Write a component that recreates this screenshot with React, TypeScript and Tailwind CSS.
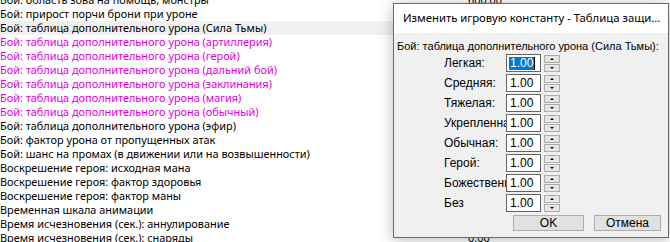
import React from 'react';

type Row = { text: string; value?: string; pink?: boolean; selected?: boolean };

const rows: Row[] = [
  { text: 'Бой: область зова на помощь, монстры', value: '600.00' },
  { text: 'Бой: прирост порчи брони при уроне' },
  { text: 'Бой: таблица дополнительного урона (Сила Тьмы)', selected: true },
  { text: 'Бой: таблица дополнительного урона (артиллерия)', pink: true },
  { text: 'Бой: таблица дополнительного урона (герой)', pink: true },
  { text: 'Бой: таблица дополнительного урона (дальний бой)', pink: true },
  { text: 'Бой: таблица дополнительного урона (заклинания)', pink: true },
  { text: 'Бой: таблица дополнительного урона (магия)', pink: true },
  { text: 'Бой: таблица дополнительного урона (обычный)', pink: true },
  { text: 'Бой: таблица дополнительного урона (эфир)' },
  { text: 'Бой: фактор урона от пропущенных атак' },
  { text: 'Бой: шанс на промах (в движении или на возвышенности)' },
  { text: 'Воскрешение героя: исходная мана' },
  { text: 'Воскрешение героя: фактор здоровья' },
  { text: 'Воскрешение героя: фактор маны' },
  { text: 'Временная шкала анимации' },
  { text: 'Время исчезновения (сек.): аннулирование' },
  { text: 'Время исчезновения (сек.): снаряды', value: '0.00' },
];

const armors = ['Легкая:', 'Средняя:', 'Тяжелая:', 'Укрепленная:', 'Обычная:', 'Герой:', 'Божественная:', 'Без'];

function Spinner() {
  return (
    <div className="flex flex-col w-[16px] h-[17px] gap-[1px]">
      <div className="flex-1 flex items-center justify-center bg-[#e6e6e6] border border-[#acacac]">
        <div className="w-0 h-0 border-l-[2px] border-r-[2px] border-b-[2px] border-l-transparent border-r-transparent border-b-black" />
      </div>
      <div className="flex-1 flex items-center justify-center bg-[#e6e6e6] border border-[#acacac]">
        <div className="w-0 h-0 border-l-[2px] border-r-[2px] border-t-[2px] border-l-transparent border-r-transparent border-t-black" />
      </div>
    </div>
  );
}

export default function App() {
  return (
    <div className="relative w-[670px] h-[242px] overflow-hidden bg-white font-['Noto_Sans',sans-serif] text-[10.9px] text-black">
      {/* constants list */}
      <div className="mt-[-7px]">
        {rows.map((r, i) => (
          <div
            key={i}
            className={`flex h-[14px] items-center leading-[14px] whitespace-nowrap ${r.selected ? 'bg-[#f0f0f0]' : ''} ${r.pink ? 'text-[#e000e0]' : ''}`}
          >
            <span className="w-[468px] shrink-0">{r.text}</span>
            <span>{r.value}</span>
          </div>
        ))}
      </div>

      {/* dialog */}
      <div className="absolute left-[393px] top-[3px] w-[276px] h-[235px] border border-[#6b6b6b] bg-[#f0f0f0] shadow-[0_2px_14px_rgba(0,0,0,0.28)] flex flex-col">
        <div className="h-[29px] bg-white flex items-center pl-[9px] text-[11.3px] whitespace-nowrap">
          Изменить игровую константу - Таблица защи...
        </div>
        <div className="flex flex-col font-['Liberation_Sans',sans-serif] text-[12px] pt-[7px]">
          <div className="h-[13px] leading-[13px] pl-[3px] text-[11px] whitespace-nowrap">Бой: таблица дополнительного урона (Сила Тьмы):</div>
          {armors.map((a, i) => (
            <div key={a} className="h-[20px] flex items-center">
              <span className="w-[62px] ml-[50px] overflow-hidden whitespace-nowrap">{a}</span>
              <div className="w-[35px] h-[18px] bg-white border border-[#646464] flex items-center pl-[2px]">
                {i === 0 ? (
                  <span className="flex items-center">
                    <span className="bg-[#0078d7] text-white px-[1px] leading-[13px]">1.00</span>
                    <span className="w-[1px] h-[13px] bg-black" />
                  </span>
                ) : (
                  <span className="pl-[1px]">1.00</span>
                )}
              </div>
              <div className="ml-[3px]">
                <Spinner />
              </div>
            </div>
          ))}
          <div className="flex mt-[2px] pl-[119px] gap-[10px]">
            <button className="w-[71px] h-[16px] bg-[#e1e1e1] border border-[#adadad] flex items-center justify-center leading-none">OK</button>
            <button className="w-[67px] h-[16px] bg-[#e1e1e1] border border-[#adadad] flex items-center justify-center leading-none">Отмена</button>
          </div>
        </div>
      </div>
    </div>
  );
}
